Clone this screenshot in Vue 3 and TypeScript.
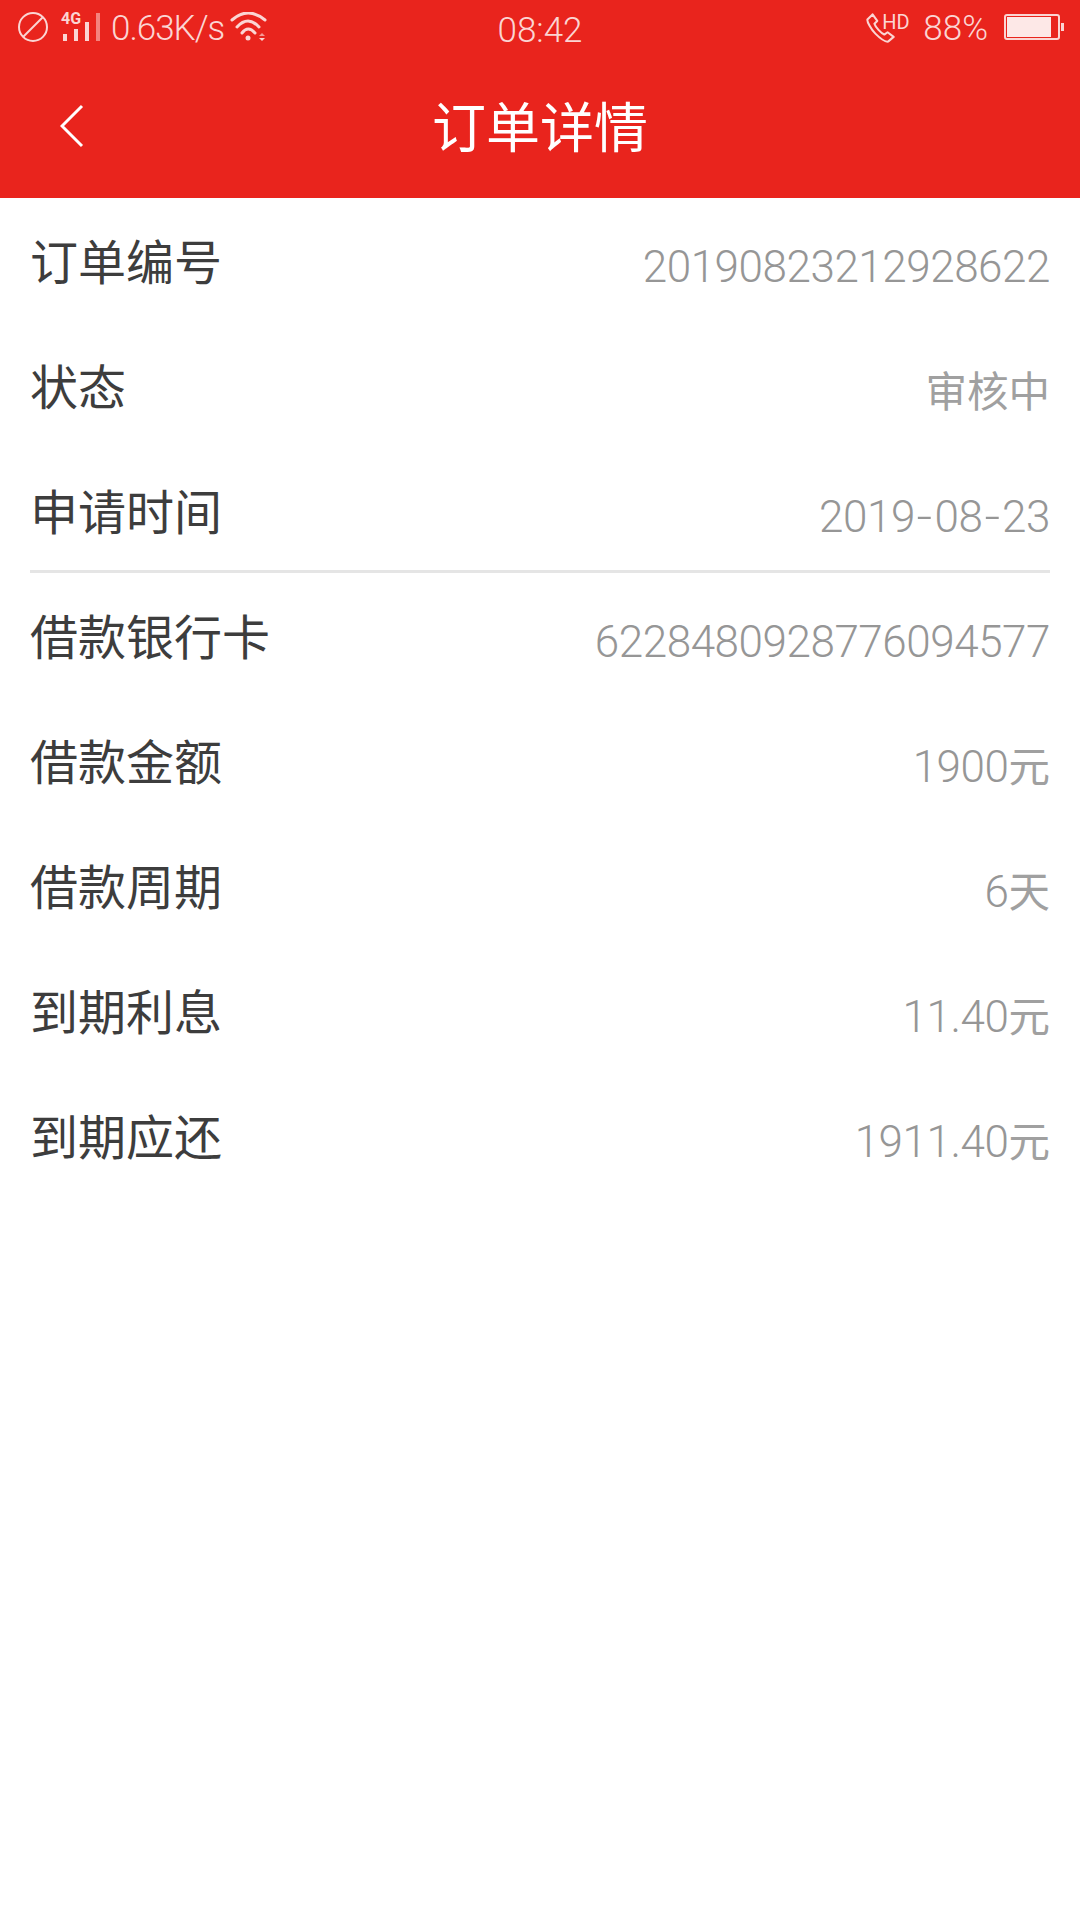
<script setup lang="ts">
const group1 = [
  { label: '订单编号', value: '20190823212928622' },
  { label: '状态', value: '审核中' },
  { label: '申请时间', value: '2019-08-23' },
]
const group2 = [
  { label: '借款银行卡', value: '6228480928776094577' },
  { label: '借款金额', value: '1900元' },
  { label: '借款周期', value: '6天' },
  { label: '到期利息', value: '11.40元' },
  { label: '到期应还', value: '1911.40元' },
]

function parts(value: string): { text: string; kind: string }[] {
  const found = value.match(/[\u4e00-\u9fff]+|-|[^\u4e00-\u9fff-]+/g) ?? []
  return found.map((text) => ({
    text,
    kind: text === '-' ? 'hy' : /[\u4e00-\u9fff]/.test(text) ? 'cjk' : 'num',
  }))
}
</script>

<template>
  <div class="page">
    <header class="header">
      <div class="status">
        <div class="st-left">
          <svg class="ic-dnd" width="32" height="32" viewBox="0 0 32 32" fill="none" stroke="#fbd5d3" stroke-width="2">
            <circle cx="16" cy="16" r="14" />
            <path d="M6 26 L26 6" />
          </svg>
          <div class="signal">
            <span class="net">4G</span>
            <svg width="40" height="28" viewBox="0 0 40 28" fill="#fbd5d3">
              <rect x="2" y="21" width="4" height="7" />
              <rect x="13" y="16" width="4" height="12" />
              <rect x="24" y="9" width="4" height="19" />
              <rect x="35" y="0" width="4" height="28" fill="#f4837e" />
            </svg>
          </div>
          <span class="speed">0.63K/s</span>
          <svg class="ic-wifi" width="38" height="30" viewBox="0 0 38 30" fill="none" stroke="#fbd5d3" stroke-width="3" stroke-linecap="round">
            <path d="M2 8 Q18 -6 35 8" />
            <path d="M7 15 Q18 3 29 15" />
            <path d="M12 21 Q18 13 25 21" />
            <circle cx="18" cy="26" r="2.5" fill="#fbd5d3" stroke="none" />
            <path d="M29 24 l3 -3 l3 3 z" fill="#f59a95" stroke="none" />
            <path d="M29 26 l3 3 l3 -3 z" fill="#fbd5d3" stroke="none" />
          </svg>
        </div>
        <span class="clock">08:42</span>
        <div class="st-right">
          <div class="hd">
            <svg width="30" height="30" viewBox="0 0 32 32" fill="none" stroke="#fbd5d3" stroke-width="2.2" stroke-linejoin="round">
              <path d="M7 1.5 L1.5 7 C1 9 5 17 10 22 C15 27 21 31 23.5 30.5 L29.5 25.5 L23 20.5 L19.5 23 C16 21.5 10 15 9 11.5 L12 8.5 Z" />
            </svg>
            <span class="hd-text">HD</span>
          </div>
          <span class="pct">88%</span>
          <div class="battery">
            <div class="cell"><div class="fill" /></div>
            <div class="tip" />
          </div>
        </div>
      </div>
      <div class="nav">
        <svg class="back" width="24" height="44" viewBox="0 0 24 44" fill="none" stroke="#fff" stroke-width="3">
          <path d="M22 2 L2 22 L22 42" />
        </svg>
        <span class="title">订单详情</span>
      </div>
    </header>
    <main class="body">
      <div class="group first">
        <div v-for="r in group1" :key="r.label" class="row">
          <span class="label">{{ r.label }}</span>
          <span class="value"><span v-for="(p, i) in parts(r.value)" :key="i" :class="p.kind">{{ p.text }}</span></span>
        </div>
      </div>
      <div class="group">
        <div v-for="r in group2" :key="r.label" class="row">
          <span class="label">{{ r.label }}</span>
          <span class="value"><span v-for="(p, i) in parts(r.value)" :key="i" :class="p.kind">{{ p.text }}</span></span>
        </div>
      </div>
    </main>
  </div>
</template>

<style scoped>
.page {
  width: 1080px;
  height: 1920px;
  background: #fff;
  font-family: Roboto, "Noto Sans CJK SC", sans-serif;
  overflow: hidden;
}
.header {
  height: 198px;
  background: #e9241d;
  color: #fff;
}
.status {
  height: 56px;
  position: relative;
  display: flex;
  align-items: center;
  justify-content: space-between;
  color: #fbd5d3;
  font-size: 35px;
  font-weight: 300;
}
.st-left {
  display: flex;
  align-items: center;
  padding-left: 17px;
}
.ic-dnd { margin-bottom: 2px; }
.signal {
  position: relative;
  width: 40px;
  height: 28px;
  margin-left: 12px;
  margin-bottom: 2px;
}
.signal svg { display: block; }
.net {
  position: absolute;
  left: 0;
  top: -2px;
  font-size: 16px;
  font-weight: 700;
  line-height: 16px;
}
.speed {
  margin-left: 10px;
  margin-top: 2px;
  white-space: nowrap;
  letter-spacing: -1px;
  line-height: 56px;
}
.ic-wifi { margin-left: 6px; margin-bottom: 2px; }
.clock {
  position: absolute;
  left: 0;
  right: 0;
  top: 3px;
  text-align: center;
  line-height: 56px;
}
.st-right {
  display: flex;
  align-items: center;
  padding-right: 16px;
}
.hd { position: relative; width: 42px; height: 30px; margin-bottom: 1px; }
.hd svg { display: block; }
.hd-text {
  position: absolute;
  left: 16px;
  top: -1px;
  font-size: 20px;
  line-height: 20px;
  font-weight: 400;
}
.pct { margin-left: 15px; margin-top: 2px; line-height: 56px; }
.battery {
  display: flex;
  align-items: center;
  margin-left: 16px;
  margin-bottom: 2px;
}
.cell {
  width: 56px;
  height: 26px;
  box-sizing: border-box;
  border: 2px solid #fbd5d3;
  border-radius: 3px;
  padding: 1px;
}
.fill {
  width: 44px;
  height: 100%;
  background: #fde8e7;
}
.tip {
  width: 3px;
  height: 8px;
  margin-left: 1px;
  background: #fbd5d3;
}
.nav {
  height: 142px;
  position: relative;
  display: flex;
  align-items: center;
  justify-content: center;
}
.back {
  position: absolute;
  left: 60px;
  top: 48px;
}
.title {
  font-size: 54px;
  line-height: 60px;
  color: #fff;
  font-weight: 400;
  margin-top: 5px;
}
.body {
  padding: 0 30px;
}
.group.first {
  height: 375px;
  box-sizing: border-box;
  border-bottom: 3px solid #e5e5e5;
}
.row {
  height: 125px;
  display: flex;
  align-items: center;
  justify-content: space-between;
}
.label {
  font-size: 48px;
  line-height: 60px;
  color: #3d3d3d;
  font-weight: 400;
  padding-top: 6px;
}
.value {
  line-height: 60px;
  color: #969696;
  font-size: 44px;
  font-weight: 300;
  padding-top: 13px;
  white-space: nowrap;
}
.num { letter-spacing: -0.45px; }
.cjk { font-size: 41.5px; font-weight: 400; color: #a0a0a0; }
.hy {
  display: inline-block;
  transform: scaleX(1.25);
  margin: 0 3.5px;
}
</style>
